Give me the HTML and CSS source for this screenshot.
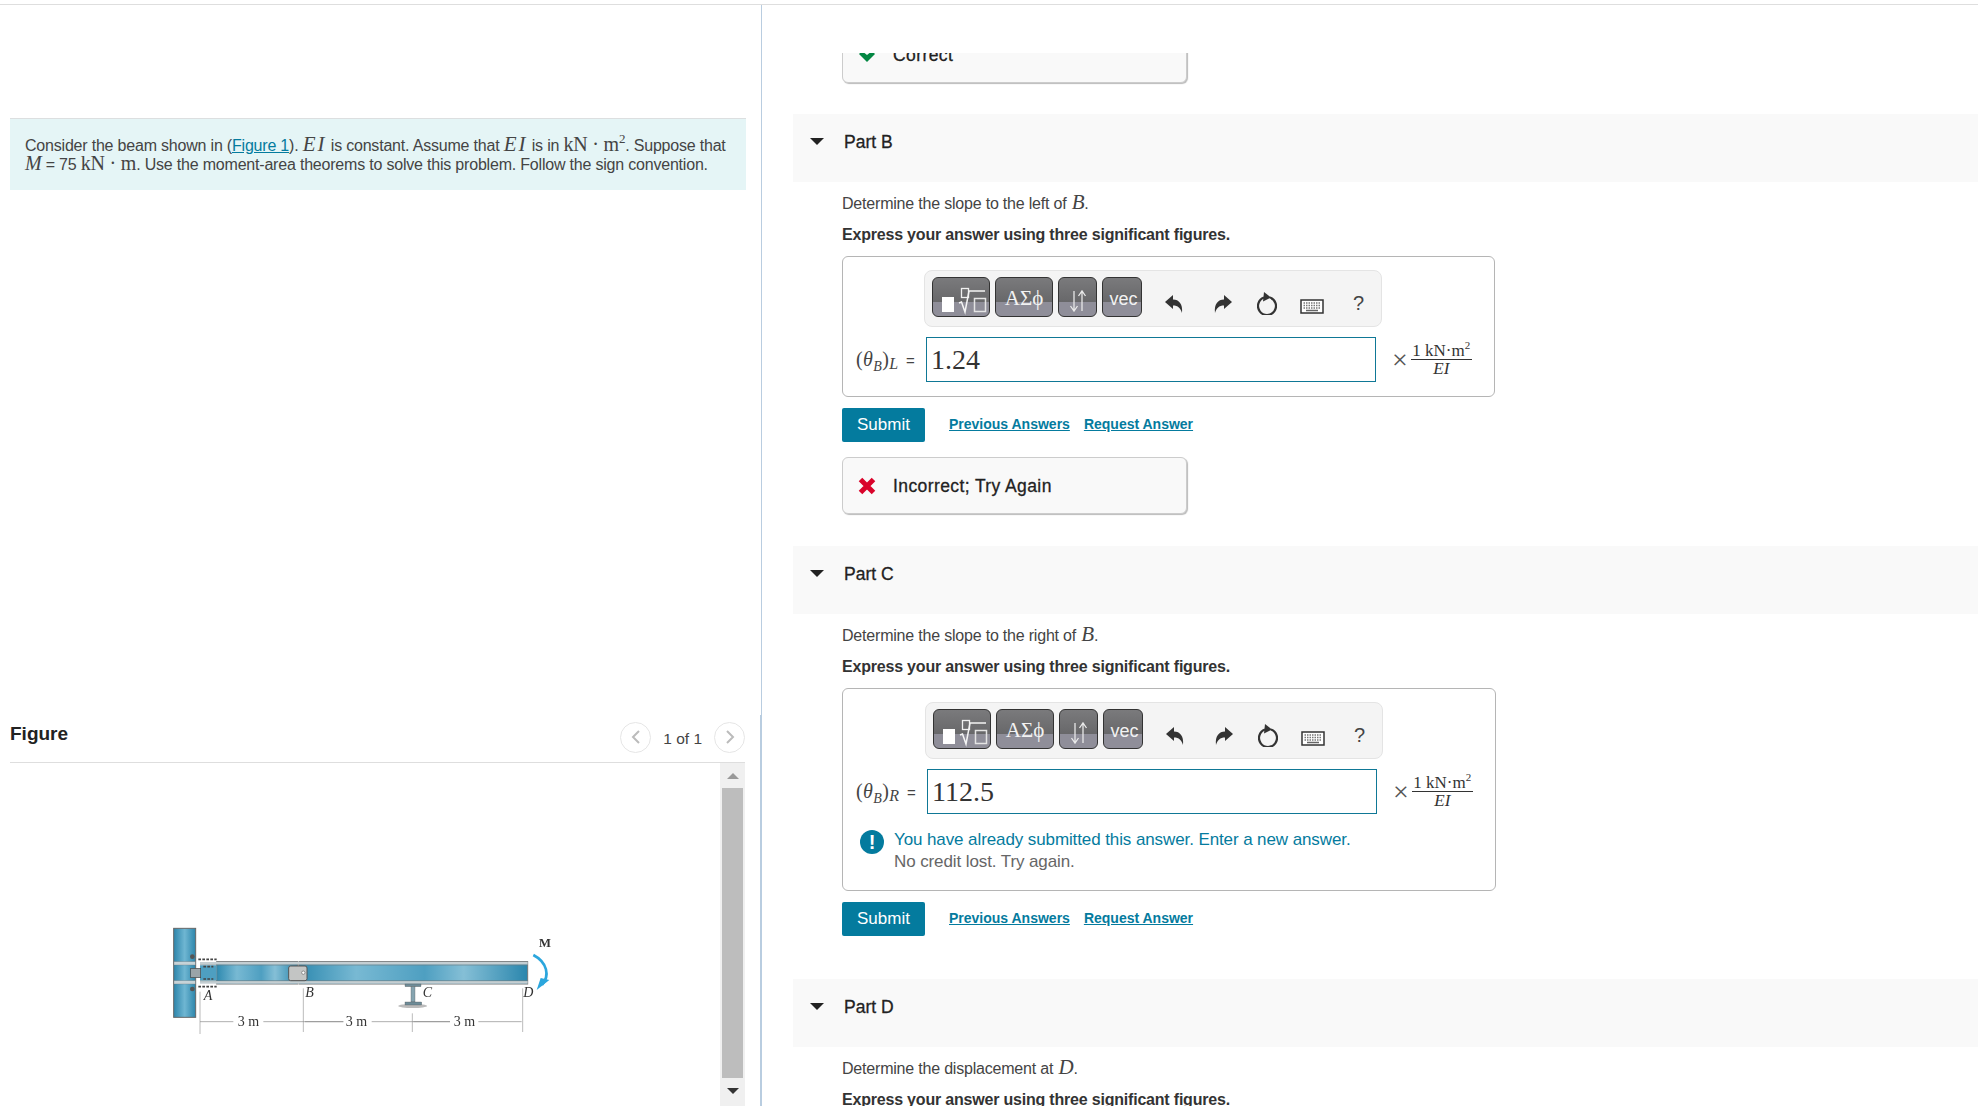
FILE: index.html

```html
<!DOCTYPE html>
<html lang="en">
<head>
    <meta charset="UTF-8">
    <title>Beam assignment</title>
    <link rel="stylesheet" href="styles.css">
</head>
<body>
    <div class="page">
        <div class="left-pane">
            <div class="problem">
                <p>Consider the beam shown in (<a href="#">Figure 1</a>). <i class="math ei">EI</i> is constant. Assume that <i class="math ei">EI</i> is in <span class="math">kN · m<sup>2</sup></span>. Suppose that</p>
                <p><i class="math">M</i> = 75 <span class="math">kN · m</span>. Use the moment-area theorems to solve this problem. Follow the sign convention.</p>
            </div>

            <div class="figure-section">
                <div class="figure-head">
                    <h2>Figure</h2>
                    <div class="pager">
                        <span class="pager-btn">
                            <svg width="10" height="16" viewBox="0 0 10 16"><path d="M8 2 2 8l6 6" fill="none" stroke="#bbb" stroke-width="2"/></svg>
                        </span>
                        <span class="pager-text">1 of 1</span>
                        <span class="pager-btn">
                            <svg width="10" height="16" viewBox="0 0 10 16"><path d="M2 2l6 6-6 6" fill="none" stroke="#bbb" stroke-width="2"/></svg>
                        </span>
                    </div>
                </div>
                <div class="figure-body">
                    <div class="figure-img">
                        <svg class="beam" width="430" height="196" viewBox="0 0 1290 588">
                            <defs>
                                <linearGradient id="colBlue" x1="0" x2="1" y1="0" y2="0">
                                    <stop offset="0" stop-color="#2c85ab"/>
                                    <stop offset="0.5" stop-color="#6fb6d2"/>
                                    <stop offset="1" stop-color="#2c85ab"/>
                                </linearGradient>
                                <linearGradient id="beamBlue" x1="0" x2="1" y1="0" y2="0">
                                    <stop offset="0" stop-color="#2f8ab0"/>
                                    <stop offset="0.25" stop-color="#78b9d3"/>
                                    <stop offset="0.55" stop-color="#4e9fc1"/>
                                    <stop offset="0.72" stop-color="#85bfd6"/>
                                    <stop offset="1" stop-color="#2a86ad"/>
                                </linearGradient>
                            </defs>
                            <rect x="71" y="55" width="66" height="267" fill="url(#colBlue)" stroke="#666" stroke-width="3"/>
                            <rect x="72" y="155" width="64" height="10" fill="#c6d3d8" stroke="#777" stroke-width="1"/>
                            <rect x="72" y="212" width="64" height="10" fill="#c6d3d8" stroke="#777" stroke-width="1"/>
                            <rect x="200" y="155" width="243" height="67" fill="url(#beamBlue)" stroke="#777" stroke-width="3"/>
                            <rect x="447" y="155" width="686" height="67" fill="url(#beamBlue)" stroke="#777" stroke-width="3"/>
                            <rect x="150" y="156" width="983" height="8" fill="#c4ced2"/>
                            <rect x="150" y="213" width="983" height="8" fill="#c4ced2"/>
                            <path d="M150 165h983M150 212h983" stroke="#6b7c84" stroke-width="2"/>
                            <rect x="150" y="166" width="50" height="45" fill="#4e9fc1"/>
                            <rect x="122" y="175" width="30" height="28" fill="#9aa4a8" stroke="#444" stroke-width="2"/>
                            <circle cx="127" cy="140" r="7" fill="#555"/>
                            <circle cx="127" cy="237" r="7" fill="#555"/>
                            <path d="M145 148h55M145 230h55M160 170h30M160 207h30" stroke="#444" stroke-width="5" stroke-dasharray="8 4"/>
                            <rect x="416" y="168" width="55" height="44" rx="6" fill="#c3c5c4" stroke="#555" stroke-width="3"/>
                            <circle cx="460" cy="188" r="5" fill="#fff" stroke="#666" stroke-width="2"/>
                            <ellipse cx="788" cy="288" rx="43" ry="6" fill="#bbb"/>
                            <rect x="765" y="222" width="48" height="8" fill="#6e8c98" stroke="#555" stroke-width="1"/>
                            <rect x="783" y="230" width="12" height="46" fill="#86a4b0" stroke="#555" stroke-width="1"/>
                            <rect x="765" y="276" width="50" height="9" fill="#6e8c98" stroke="#555" stroke-width="1"/>
                            <path d="M150 245v127M460 235v131M787 310v56M1118 235v131" stroke="#999" stroke-width="2" fill="none"/>
                            <path d="M150 335h100M340 335h240M465 335h115M665 335h235M790 335h110M985 335h130" stroke="#888" stroke-width="2" fill="none"/>
                            <text class="beam-dim" x="263" y="348">3 m</text>
                            <text class="beam-dim" x="587" y="348">3 m</text>
                            <text class="beam-dim" x="911" y="348">3 m</text>
                            <text class="beam-label" x="161" y="270">A</text>
                            <text class="beam-label" x="466" y="262">B</text>
                            <text class="beam-label" x="818" y="262">C</text>
                            <text class="beam-label" x="1120" y="262">D</text>
                            <text class="beam-moment" x="1167" y="112">M</text>
                            <path d="M1150 135c42 22 50 62 26 90" fill="none" stroke="#2ba6dd" stroke-width="8"/>
                            <path d="M1160 240l12-36 26 6z" fill="#2ba6dd"/>
                        </svg>
                    </div>
                    <div class="scrollbar">
                        <span class="arrow-up"></span>
                        <span class="thumb"></span>
                        <span class="arrow-down"></span>
                    </div>
                </div>
            </div>
        </div>

        <div class="right-pane">
            <div class="scroll-inner">
                <div class="part-body first">
                    <div class="feedback">
                        <svg width="18" height="14" viewBox="0 0 18 14"><path d="M1 6l3-3 5 4 5-4 3 3-8 8z" fill="#038743"/></svg>
                        <span>Correct</span>
                    </div>
                </div>

                <div class="part-head"><span class="caret"></span><h3>Part B</h3></div>
                <div class="part-body">
                    <p class="prompt">Determine the slope to the left of <i class="math big">B</i>.</p>
                    <p class="hint">Express your answer using three significant figures.</p>
                    <div class="answer-box">
                        <div class="toolbar">
                            <span class="tool tool-1">
                                <svg width="56" height="38" viewBox="0 0 56 38"><rect x="9" y="19" width="12" height="15" fill="#fff"/><rect x="28.500" y="10.500" width="7" height="9" fill="none" stroke="#f0f0f0" stroke-width="1.300"/><path d="M26 25l2.500-1 3.500 10 4-21h16" fill="none" stroke="#f4f4f4" stroke-width="1.500"/><rect x="41.500" y="20.500" width="11" height="13" fill="none" stroke="#e4e4e4" stroke-width="1.500"/></svg>
                            </span>
                            <span class="tool tool-2">ΑΣϕ</span>
                            <span class="tool tool-3">
                                <svg width="20" height="24" viewBox="0 0 20 24"><path d="M6 2v19M2.500 17 6 22l3.500-5M14 22V3M10.500 7 14 2l3.500 5" fill="none" stroke="#e8e8e8" stroke-width="1.300"/></svg>
                            </span>
                            <span class="tool tool-4">vec</span>
                            <span class="icons">
                                <svg class="undo" width="18" height="19" viewBox="0 0 18 19"><path d="M0 8 8 1v4.500c6 0 10 4.500 9 13.500-1.500-5-4-7.500-9-7.500V15z" fill="#333"/></svg>
                                <svg class="redo" width="18" height="19" viewBox="0 0 18 19"><path d="M0 8 8 1v4.500c6 0 10 4.500 9 13.500-1.500-5-4-7.500-9-7.500V15z" fill="#333"/></svg>
                                <svg class="reload" width="20" height="23" viewBox="0 0 20 23"><path d="M7 5.500a9 9 0 1 0 6 0" fill="none" stroke="#333" stroke-width="2.200"/><path d="M7 0l7 5.500-8 4z" fill="#333"/></svg>
                                <svg class="kbd" width="24" height="15" viewBox="0 0 24 15"><rect x="1" y="1" width="22" height="13" fill="#fff" stroke="#333" stroke-width="1.500"/><path d="M3.500 4h17M3.500 6.500h17M3.500 9h17" stroke="#777" stroke-width="1.500" stroke-dasharray="1.500 1"/><path d="M6 11.500h12" stroke="#666" stroke-width="1.500"/></svg>
                                <span class="help">?</span>
                            </span>
                        </div>
                        <div class="input-row">
                            <span class="answer-label">(<i>θ<sub>B</sub></i>)<i class="tail">L</i> <span class="eq">=</span></span>
                            <div class="answer-input">1.24</div>
                            <span class="times">×</span>
                            <span class="fraction"><span class="num">1 kN·m<sup>2</sup></span><i class="den">EI</i></span>
                        </div>
                    </div>
                    <div class="actions">
                        <button class="submit-btn">Submit</button>
                        <a class="action-link" href="#">Previous Answers</a>
                        <a class="action-link" href="#">Request Answer</a>
                    </div>
                    <div class="feedback">
                        <svg width="18" height="18" viewBox="0 0 18 18"><path d="M2.500 2.500l13 13M15.500 2.500l-13 13" stroke="#d9042b" stroke-width="5"/></svg>
                        <span>Incorrect; Try Again</span>
                    </div>
                </div>

                <div class="part-head part-c"><span class="caret"></span><h3>Part C</h3></div>
                <div class="part-body">
                    <p class="prompt">Determine the slope to the right of <i class="math big">B</i>.</p>
                    <p class="hint">Express your answer using three significant figures.</p>
                    <div class="answer-box wide">
                        <div class="toolbar">
                            <span class="tool tool-1">
                                <svg width="56" height="38" viewBox="0 0 56 38"><rect x="9" y="19" width="12" height="15" fill="#fff"/><rect x="28.500" y="10.500" width="7" height="9" fill="none" stroke="#f0f0f0" stroke-width="1.300"/><path d="M26 25l2.500-1 3.500 10 4-21h16" fill="none" stroke="#f4f4f4" stroke-width="1.500"/><rect x="41.500" y="20.500" width="11" height="13" fill="none" stroke="#e4e4e4" stroke-width="1.500"/></svg>
                            </span>
                            <span class="tool tool-2">ΑΣϕ</span>
                            <span class="tool tool-3">
                                <svg width="20" height="24" viewBox="0 0 20 24"><path d="M6 2v19M2.500 17 6 22l3.500-5M14 22V3M10.500 7 14 2l3.500 5" fill="none" stroke="#e8e8e8" stroke-width="1.300"/></svg>
                            </span>
                            <span class="tool tool-4">vec</span>
                            <span class="icons">
                                <svg class="undo" width="18" height="19" viewBox="0 0 18 19"><path d="M0 8 8 1v4.500c6 0 10 4.500 9 13.500-1.500-5-4-7.500-9-7.500V15z" fill="#333"/></svg>
                                <svg class="redo" width="18" height="19" viewBox="0 0 18 19"><path d="M0 8 8 1v4.500c6 0 10 4.500 9 13.500-1.500-5-4-7.500-9-7.500V15z" fill="#333"/></svg>
                                <svg class="reload" width="20" height="23" viewBox="0 0 20 23"><path d="M7 5.500a9 9 0 1 0 6 0" fill="none" stroke="#333" stroke-width="2.200"/><path d="M7 0l7 5.500-8 4z" fill="#333"/></svg>
                                <svg class="kbd" width="24" height="15" viewBox="0 0 24 15"><rect x="1" y="1" width="22" height="13" fill="#fff" stroke="#333" stroke-width="1.500"/><path d="M3.500 4h17M3.500 6.500h17M3.500 9h17" stroke="#777" stroke-width="1.500" stroke-dasharray="1.500 1"/><path d="M6 11.500h12" stroke="#666" stroke-width="1.500"/></svg>
                                <span class="help">?</span>
                            </span>
                        </div>
                        <div class="input-row">
                            <span class="answer-label">(<i>θ<sub>B</sub></i>)<i class="tail">R</i> <span class="eq">=</span></span>
                            <div class="answer-input">112.5</div>
                            <span class="times">×</span>
                            <span class="fraction"><span class="num">1 kN·m<sup>2</sup></span><i class="den">EI</i></span>
                        </div>
                        <div class="notice">
                            <span class="notice-icon">!</span>
                            <div>
                                <p class="notice-main">You have already submitted this answer. Enter a new answer.</p>
                                <p class="notice-sub">No credit lost. Try again.</p>
                            </div>
                        </div>
                    </div>
                    <div class="actions">
                        <button class="submit-btn">Submit</button>
                        <a class="action-link" href="#">Previous Answers</a>
                        <a class="action-link" href="#">Request Answer</a>
                    </div>
                </div>

                <div class="part-head part-d"><span class="caret"></span><h3>Part D</h3></div>
                <div class="part-body">
                    <p class="prompt">Determine the displacement at <i class="math big">D</i>.</p>
                    <p class="hint">Express your answer using three significant figures.</p>
                </div>
            </div>
        </div>
    </div>
</body>
</html>
```

FILE: styles.css

```css
html, body {
    margin: 0;
    padding: 0;
    height: 100%;
    overflow: hidden;
}

body {
    font-family: "Liberation Sans", Arial, sans-serif;
    color: #333;
    background-color: #fff;
}

p {
    margin: 0;
}

.page {
    display: flex;
    height: 1106px;
    margin-top: 4px;
    border-top: 1px solid #dedede;
    box-sizing: border-box;
}

.math {
    font-family: "Liberation Serif", "Times New Roman", serif;
    font-size: 20px;
    line-height: 1;
}

.ei {
    font-size: 21px;
    letter-spacing: 2px;
}

sup {
    font-size: 13px;
    line-height: 0;
}

/* left column */
.left-pane {
    width: 762px;
    flex: none;
    display: flex;
    flex-direction: column;
    box-sizing: border-box;
    border-right: 1px solid #b9cde0;
}

.problem {
    width: 736px;
    height: 72px;
    margin: 113px 0 0 10px;
    padding: 15px 15px 0;
    box-sizing: border-box;
    background-color: #e5f5f6;
    border-top: 1px solid #dcdfe0;
    font-size: 16px;
    line-height: 19px;
    letter-spacing: -0.2px;
    color: #444;
}

.problem p {
    height: 19px;
    white-space: nowrap;
}

.problem a {
    color: #047b9e;
}

.figure-section {
    flex: 1;
    margin-top: 525px;
    padding: 5px 0 0 10px;
    min-height: 0;
    border-right: 1px solid #b9cde0;
    display: flex;
    flex-direction: column;
}

.figure-head {
    width: 735px;
    height: 43px;
    display: flex;
    align-items: center;
    justify-content: space-between;
    border-bottom: 1px solid #dedede;
    box-sizing: border-box;
    padding-bottom: 8px;
    flex: none;
}

.figure-head h2 {
    margin: 0 0 6px;
    font-size: 19px;
    color: #222;
}

.pager {
    display: flex;
    align-items: center;
    gap: 12px;
}

.pager-btn {
    width: 29px;
    height: 29px;
    border: 1px solid #e6e6e6;
    border-radius: 50%;
    display: flex;
    align-items: center;
    justify-content: center;
}

.pager-text {
    font-size: 15.5px;
    margin-top: 3px;
    color: #444;
}

.figure-body {
    width: 735px;
    flex: 1;
    display: flex;
}

.figure-img {
    flex: 1;
    padding: 147px 0 0 140px;
}

.beam {
    filter: blur(0.4px);
}

.beam-dim {
    font-family: "Liberation Serif", serif;
    font-size: 42px;
    fill: #333;
}

.beam-label {
    font-family: "Liberation Serif", serif;
    font-size: 42px;
    font-style: italic;
    fill: #333;
}

.beam-moment {
    font-family: "Liberation Serif", serif;
    font-size: 38px;
    font-weight: bold;
    fill: #333;
}

.scrollbar {
    width: 25px;
    height: 343px;
    background-color: #f0f0f0;
    display: flex;
    flex-direction: column;
    align-items: center;
    flex: none;
}

.arrow-up {
    margin: 10px 0 9px;
    border-left: 6px solid transparent;
    border-right: 6px solid transparent;
    border-bottom: 6px solid #999;
}

.thumb {
    width: 21px;
    height: 290px;
    background-color: #bdbdbd;
}

.arrow-down {
    margin-top: 10px;
    border-left: 6px solid transparent;
    border-right: 6px solid transparent;
    border-top: 6px solid #333;
}

/* right column */
.right-pane {
    flex: 1;
    min-width: 0;
    margin-top: 48px;
    padding-left: 31px;
    overflow: hidden;
}

.scroll-inner {
    margin-top: -27px;
}

.part-head {
    height: 68px;
    background-color: #f9f9f9;
    display: flex;
    align-items: flex-start;
    padding: 18px 0 0 17px;
    box-sizing: border-box;
    margin-top: 31px;
}

.part-c {
    margin-top: 32px;
}

.part-d {
    margin-top: 43px;
}

.caret {
    margin: 6px 20px 0 0;
    border-left: 7px solid transparent;
    border-right: 7px solid transparent;
    border-top: 7px solid #222;
}

.part-head h3 {
    margin: 0;
    font-size: 17.5px;
    line-height: 20px;
    font-weight: normal;
    color: #222;
    -webkit-text-stroke: 0.3px #222;
}

.part-body {
    padding-left: 49px;
}

.prompt {
    margin-top: 10px;
    font-size: 16px;
    line-height: 24px;
    letter-spacing: -0.2px;
    color: #444;
}

.math.big {
    font-size: 21px;
    line-height: 20px;
    margin-left: 1px;
}

.hint {
    margin-top: 7px;
    font-size: 16px;
    line-height: 24px;
    font-weight: bold;
    letter-spacing: -0.2px;
    color: #333;
}

.answer-box {
    width: 653px;
    height: 141px;
    margin-top: 9px;
    padding-top: 13px;
    box-sizing: border-box;
    border: 1px solid #b5b5b5;
    border-radius: 6px;
}

.answer-box.wide {
    width: 654px;
    height: 203px;
}

.toolbar {
    width: 458px;
    height: 57px;
    margin-left: 81px;
    padding: 6px 0 0 7px;
    box-sizing: border-box;
    background-color: #f4f4f4;
    border: 1px solid #e4e4e4;
    border-radius: 8px;
    display: flex;
}

.wide .toolbar {
    margin-left: 82px;
}

.tool {
    height: 40px;
    margin-right: 5px;
    box-sizing: border-box;
    border: 1px solid #333;
    border-radius: 6px;
    background: linear-gradient(#7a7a7c, #68686a 62%, #8f8e99 63%, #8f8e99);
    color: #f2f2f2;
    display: flex;
    align-items: center;
    justify-content: center;
    flex: none;
    overflow: hidden;
}

.tool-1 {
    width: 58px;
}

.tool-2 {
    width: 58px;
    font-family: "Liberation Serif", serif;
    font-size: 21px;
    padding-top: 2px;
}

.tool-3 {
    width: 39px;
    padding-top: 8px;
}

.tool-4 {
    width: 40px;
    font-size: 18px;
    padding: 4px 0 0 3px;
}

.icons {
    display: flex;
    align-items: center;
    margin: 4px 0 0 18px;
    height: 44px;
}

.undo {
    margin-right: 31px;
}

.redo {
    margin-right: 25px;
    transform: scaleX(-1);
}

.reload {
    margin-right: 23px;
}

.kbd {
    margin-top: 6px;
    margin-right: 29px;
}

.help {
    font-size: 20px;
    color: #444;
}

.input-row {
    display: flex;
    align-items: center;
    margin-top: 10px;
    padding-left: 13px;
}

.answer-label {
    width: 70px;
    flex: none;
    font-family: "Liberation Serif", serif;
    font-size: 20px;
    letter-spacing: 0.4px;
    color: #444;
    white-space: nowrap;
}

.wide .answer-label {
    width: 71px;
}

.answer-label sub {
    font-size: 14px;
    line-height: 0;
}

.tail {
    font-size: 16px;
    position: relative;
    top: 3px;
}

.eq {
    font-family: "Liberation Sans", sans-serif;
    font-size: 15px;
    margin-left: 2px;
}

.answer-input {
    width: 450px;
    height: 45px;
    box-sizing: border-box;
    padding-left: 4px;
    border: 1px solid #0f7896;
    font-family: "Liberation Serif", serif;
    font-size: 28px;
    line-height: 43px;
    color: #333;
    flex: none;
}

.times {
    margin-left: 16px;
    font-family: "Liberation Serif", serif;
    font-size: 28px;
    line-height: 1;
    color: #555;
}

.fraction {
    display: flex;
    flex-direction: column;
    align-items: center;
    width: 61px;
    margin-left: 3px;
    font-family: "Liberation Serif", serif;
    font-size: 17px;
    line-height: 17px;
    color: #333;
}

.num {
    width: 100%;
    text-align: center;
    border-bottom: 1px solid #333;
    white-space: nowrap;
}

.num sup {
    font-size: 11px;
}

.notice {
    display: flex;
    margin: 15px 0 0 17px;
}

.notice-icon {
    width: 24px;
    height: 24px;
    flex: none;
    margin: 1px 10px 0 0;
    border-radius: 50%;
    background-color: #047b9e;
    color: #fff;
    font-weight: bold;
    font-size: 20px;
    line-height: 24px;
    text-align: center;
}

.notice-main {
    font-size: 17px;
    line-height: 22px;
    color: #047b9e;
    letter-spacing: -0.1px;
}

.notice-sub {
    font-size: 17px;
    line-height: 22px;
    color: #666;
    letter-spacing: -0.1px;
}

.actions {
    display: flex;
    align-items: center;
    margin-top: 11px;
}

.submit-btn {
    width: 83px;
    height: 34px;
    padding: 0;
    border: none;
    border-radius: 2px;
    background-color: #047b9e;
    color: #fff;
    font-family: "Liberation Sans", sans-serif;
    font-size: 17px;
    margin-right: 24px;
}

.action-link {
    font-size: 14px;
    font-weight: bold;
    color: #047b9e;
    margin: 0 14px 2px 0;
}

.feedback {
    width: 345px;
    height: 57px;
    margin-top: 15px;
    padding: 1px 0 0 15px;
    box-sizing: border-box;
    background-color: #f9f9f9;
    border: 1px solid #ccc;
    border-radius: 6px;
    box-shadow: 1px 1px 1px #bbb;
    display: flex;
    align-items: center;
    font-size: 17.5px;
    letter-spacing: 0.4px;
    color: #222;
    -webkit-text-stroke: 0.3px #222;
}

.feedback span {
    margin-left: 17px;
}

.part-body.first .feedback {
    margin-top: 0;
}
```
